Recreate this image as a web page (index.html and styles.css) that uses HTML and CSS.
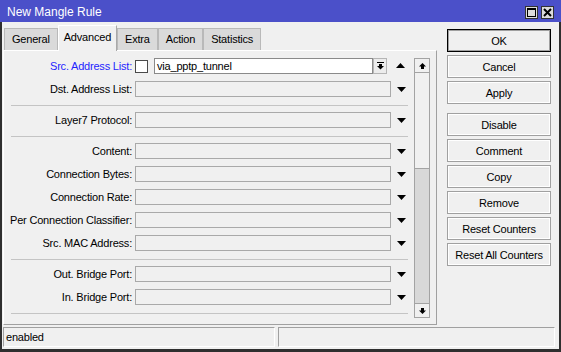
FILE: index.html
```html
<!DOCTYPE html>
<html lang="en">
<head>
    <meta charset="UTF-8">
    <meta name="viewport" content="width=device-width, initial-scale=1.0">
    <title>New Mangle Rule</title>
    <link rel="stylesheet" href="styles.css">
</head>
<body>
    <div class="window">
        <div class="titlebar">
            <span class="title">New Mangle Rule</span>
            <div class="title-buttons">
                <span class="tb-btn">
                    <svg width="11" height="11" viewBox="0 0 11 11">
                        <rect x="1.5" y="1.5" width="8" height="8" fill="none" stroke="#000" stroke-width="1"/>
                        <rect x="1" y="1" width="9" height="2" fill="#000"/>
                    </svg>
                </span>
                <span class="tb-btn">
                    <svg width="11" height="11" viewBox="0 0 11 11">
                        <path d="M2 2 L9 9 M9 2 L2 9" stroke="#000" stroke-width="2"/>
                    </svg>
                </span>
            </div>
        </div>

        <div class="window-body">
            <div class="left">
                <div class="tabs">
                    <div class="tab">General</div>
                    <div class="tab active">Advanced</div>
                    <div class="tab">Extra</div>
                    <div class="tab">Action</div>
                    <div class="tab">Statistics</div>
                </div>

                <div class="panel">
                    <div class="fields">
                        <div class="row">
                            <span class="label label-active">Src. Address List:</span>
                            <span class="checkbox"></span>
                            <span class="text-input">via_pptp_tunnel</span>
                            <span class="combo-btn">
                                <svg width="7" height="8" viewBox="0 0 7 8">
                                    <rect x="0" y="0" width="7" height="1" fill="#000"/>
                                    <rect x="2" y="2" width="3" height="2" fill="#000"/>
                                    <polygon points="0,4 7,4 3.5,7.5" fill="#000"/>
                                </svg>
                            </span>
                            <span class="arrow arrow-up">
                                <svg width="9" height="5" viewBox="0 0 9 5"><polygon points="4.5,0 9,5 0,5" fill="#000"/></svg>
                            </span>
                        </div>
                        <div class="row">
                            <span class="label">Dst. Address List:</span>
                            <span class="field"></span>
                            <span class="arrow"><svg width="9" height="5" viewBox="0 0 9 5"><polygon points="0,0 9,0 4.5,5" fill="#000"/></svg></span>
                        </div>
                        <div class="separator"></div>
                        <div class="row">
                            <span class="label">Layer7 Protocol:</span>
                            <span class="field"></span>
                            <span class="arrow"><svg width="9" height="5" viewBox="0 0 9 5"><polygon points="0,0 9,0 4.5,5" fill="#000"/></svg></span>
                        </div>
                        <div class="separator"></div>
                        <div class="row">
                            <span class="label">Content:</span>
                            <span class="field"></span>
                            <span class="arrow"><svg width="9" height="5" viewBox="0 0 9 5"><polygon points="0,0 9,0 4.5,5" fill="#000"/></svg></span>
                        </div>
                        <div class="row">
                            <span class="label">Connection Bytes:</span>
                            <span class="field"></span>
                            <span class="arrow"><svg width="9" height="5" viewBox="0 0 9 5"><polygon points="0,0 9,0 4.5,5" fill="#000"/></svg></span>
                        </div>
                        <div class="row">
                            <span class="label">Connection Rate:</span>
                            <span class="field"></span>
                            <span class="arrow"><svg width="9" height="5" viewBox="0 0 9 5"><polygon points="0,0 9,0 4.5,5" fill="#000"/></svg></span>
                        </div>
                        <div class="row">
                            <span class="label">Per Connection Classifier:</span>
                            <span class="field"></span>
                            <span class="arrow"><svg width="9" height="5" viewBox="0 0 9 5"><polygon points="0,0 9,0 4.5,5" fill="#000"/></svg></span>
                        </div>
                        <div class="row">
                            <span class="label">Src. MAC Address:</span>
                            <span class="field"></span>
                            <span class="arrow"><svg width="9" height="5" viewBox="0 0 9 5"><polygon points="0,0 9,0 4.5,5" fill="#000"/></svg></span>
                        </div>
                        <div class="separator"></div>
                        <div class="row">
                            <span class="label">Out. Bridge Port:</span>
                            <span class="field"></span>
                            <span class="arrow"><svg width="9" height="5" viewBox="0 0 9 5"><polygon points="0,0 9,0 4.5,5" fill="#000"/></svg></span>
                        </div>
                        <div class="row">
                            <span class="label">In. Bridge Port:</span>
                            <span class="field"></span>
                            <span class="arrow"><svg width="9" height="5" viewBox="0 0 9 5"><polygon points="0,0 9,0 4.5,5" fill="#000"/></svg></span>
                        </div>
                        <div class="separator"></div>
                    </div>

                    <div class="scrollbar">
                        <div class="sb-btn">
                            <svg width="7" height="6" viewBox="0 0 7 6">
                                <polygon points="3.5,0 7,3.5 0,3.5" fill="#000"/>
                                <rect x="2" y="3" width="3" height="3" fill="#000"/>
                            </svg>
                        </div>
                        <div class="sb-thumb"></div>
                        <div class="sb-track"></div>
                        <div class="sb-btn sb-btn-down">
                            <svg width="7" height="6" viewBox="0 0 7 6">
                                <rect x="2" y="0" width="3" height="3" fill="#000"/>
                                <polygon points="0,2.5 7,2.5 3.5,6" fill="#000"/>
                            </svg>
                        </div>
                    </div>
                </div>
            </div>

            <div class="buttons">
                <button class="btn btn-default">OK</button>
                <button class="btn">Cancel</button>
                <button class="btn">Apply</button>
                <button class="btn btn-group">Disable</button>
                <button class="btn">Comment</button>
                <button class="btn">Copy</button>
                <button class="btn">Remove</button>
                <button class="btn">Reset Counters</button>
                <button class="btn">Reset All Counters</button>
            </div>
        </div>

        <div class="statusbar">
            <div class="status-cell status-left">enabled</div>
            <div class="status-cell status-right"></div>
        </div>
    </div>
</body>
</html>
```

FILE: styles.css
```css
/* Dialog jendela gaya WinBox */
body {
    margin: 0;
    font-family: "Liberation Sans", Arial, sans-serif;
    font-size: 11px;
    letter-spacing: -0.2px;
    color: #000;
    background-color: #f0f0f0;
}
.window {
    width: 561px;
    height: 352px;
    box-sizing: border-box;
    background-color: #f0f0f0;
    border: 2px solid #2f2f2f;
    border-top: none;
    border-bottom-width: 3px;
    display: flex;
    flex-direction: column;
}
.titlebar {
    height: 22px;
    margin: 0 -2px;
    background-color: #4b50c9;
    display: flex;
    justify-content: space-between;
    align-items: flex-start;
    padding: 0 7px 0 7px;
}
.title {
    color: #fff;
    font-size: 12px;
    letter-spacing: 0;
    line-height: 22px;
    padding-top: 1px;
}
.title-buttons {
    display: flex;
    gap: 3px;
    margin-top: 6px;
}
.tb-btn {
    width: 13px;
    height: 13px;
    box-sizing: border-box;
    border: 1px solid #333;
    background-color: #dcdcdc;
    display: flex;
    align-items: center;
    justify-content: center;
}
.window-body {
    display: flex;
    padding-left: 1px;
}
.left {
    width: 434px;
    padding-top: 3px;
}
.tabs {
    display: flex;
    align-items: flex-end;
    height: 25px;
    padding-left: 1px;
}
.tab {
    height: 22px;
    box-sizing: border-box;
    padding: 0 7px;
    line-height: 21px;
    background-color: #dadada;
    border: 1px solid #b9b9b9;
    border-bottom: none;
}
.tab.active {
    height: 26px;
    margin-bottom: -1px;
    padding: 0 5px;
    line-height: 23px;
    background-color: #f0f0f0;
    border-color: #fff #a9a9a9 #f0f0f0 #fff;
    position: relative;
    z-index: 1;
}
.panel {
    height: 275px;
    box-sizing: border-box;
    border: 1px solid;
    border-color: #fff #a0a0a0 #a0a0a0 #fff;
    padding-top: 7px;
    display: flex;
    align-items: flex-start;
}
.fields {
    width: 409px;
    display: flex;
    flex-direction: column;
    gap: 7px;
}
.row {
    display: flex;
    align-items: center;
    height: 16px;
}
.label {
    width: 128px;
    text-align: right;
    margin-right: 3px;
    white-space: nowrap;
}
.label-active {
    color: #1f1fff;
}
.field {
    width: 256px;
    height: 16px;
    box-sizing: border-box;
    border: 1px solid #a9a9a9;
    background-color: #f0f0f0;
}
.arrow {
    display: flex;
    margin-left: 6px;
}
.arrow-up {
    margin-left: 9px;
    margin-top: -1px;
}
.checkbox {
    width: 13px;
    height: 13px;
    box-sizing: border-box;
    border: 1px solid #4a4a4a;
    background-color: #fff;
}
.text-input {
    width: 219px;
    height: 16px;
    box-sizing: border-box;
    margin-left: 6px;
    padding-left: 2px;
    line-height: 14px;
    border: 1px solid #8a8a8a;
    background-color: #fff;
}
.combo-btn {
    width: 14px;
    height: 16px;
    box-sizing: border-box;
    border: 1px solid #b5b5b5;
    background-color: #ececec;
    display: flex;
    align-items: center;
    justify-content: center;
}
.separator {
    height: 1px;
    width: 397px;
    margin: 1px 0 -1px 7px;
    background-color: #c4c4c4;
}
.scrollbar {
    width: 16px;
    height: 260px;
    box-sizing: border-box;
    margin-left: 1px;
    border: 1px solid #a3a3a3;
    background-color: #d8d8d8;
    display: flex;
    flex-direction: column;
}
.sb-btn {
    height: 13px;
    border-bottom: 1px solid #a3a3a3;
    background-color: #f0f0f0;
    display: flex;
    align-items: center;
    justify-content: center;
}
.sb-btn-down {
    border-bottom: none;
    border-top: 1px solid #a3a3a3;
}
.sb-thumb {
    height: 95px;
    border-bottom: 1px solid #a3a3a3;
    background-color: #f0f0f0;
}
.sb-track {
    flex: 1;
}
.buttons {
    display: flex;
    flex-direction: column;
    gap: 3px;
    margin-left: 10px;
    padding-top: 7px;
}
.btn {
    width: 104px;
    height: 23px;
    box-sizing: border-box;
    padding: 0;
    font-family: inherit;
    font-size: 11px;
    letter-spacing: -0.2px;
    color: #000;
    background-color: #f0f0f0;
    border: 1px solid #a0a0a0;
    box-shadow: inset 0 0 0 1px #fff;
}
.btn-default {
    border-color: #000;
    box-shadow: inset 0 0 0 1px #a0a0a0;
}
.btn-group {
    margin-top: 6px;
}
.statusbar {
    display: flex;
    margin-top: 2px;
    height: 20px;
}
.status-cell {
    height: 20px;
    box-sizing: border-box;
    border: 1px solid;
    border-color: #a0a0a0 #fff #fff #a0a0a0;
    line-height: 18px;
    padding-left: 2px;
}
.status-left {
    width: 272px;
    margin-left: 1px;
}
.status-right {
    width: 277px;
    margin-left: 3px;
}
```
